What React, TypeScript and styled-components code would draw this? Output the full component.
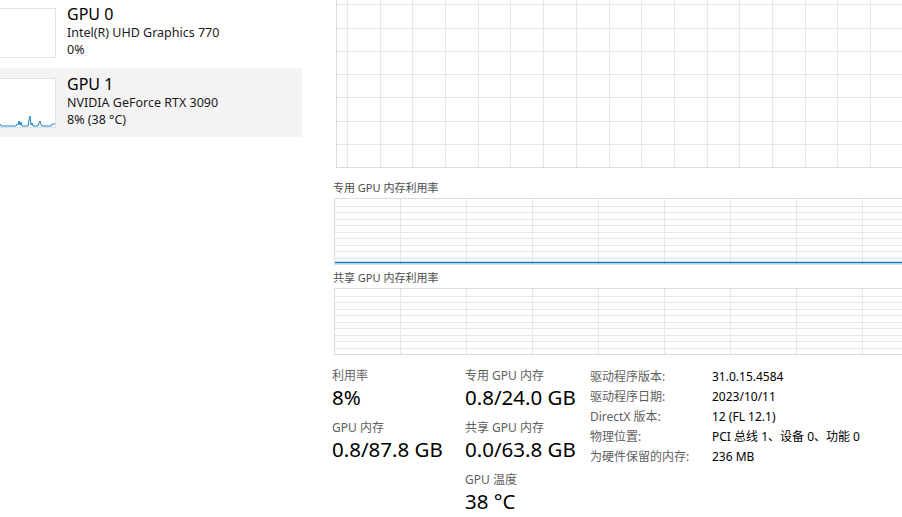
import React from 'react';
import styled, { createGlobalStyle } from 'styled-components';

const GlobalStyle = createGlobalStyle`
  html, body {
    margin: 0;
    padding: 0;
    background: #ffffff;
    overflow: hidden;
  }
  body {
    font-family: "Noto Sans", "Noto Sans CJK SC", sans-serif;
    color: #000;
  }
`;

const Page = styled.div`
  display: flex;
  width: 902px;
  height: 517px;
  overflow: hidden;
  background: #fff;
`;

const Sidebar = styled.div`
  width: 302px;
  flex-shrink: 0;
  display: flex;
  flex-direction: column;
  gap: 1px;
  margin-top: -2px;
`;

const DeviceRow = styled.div<{ $active?: boolean }>`
  height: 69px;
  display: flex;
  align-items: flex-start;
  gap: 11px;
  background: ${(p) => (p.$active ? '#f3f3f3' : 'transparent')};
`;

const Thumb = styled.div`
  width: 55px;
  height: 48px;
  margin-top: 10px;
  border: 1px solid #e2e2e2;
  border-left: none;
  background: #fff;
  flex-shrink: 0;
  overflow: hidden;
  svg {
    display: block;
  }
`;

const DeviceText = styled.div`
  display: flex;
  flex-direction: column;
  padding-top: 6px;
`;

const DeviceName = styled.div`
  font-size: 16px;
  line-height: 20px;
  color: #000;
`;

const DeviceSub = styled.div`
  font-size: 12.5px;
  line-height: 17px;
  color: #1a1a1a;
`;

const Main = styled.div`
  flex: 1;
  min-width: 0;
  display: flex;
  flex-direction: column;
  padding-left: 32px;
  overflow: hidden;
`;

const ChartBox = styled.div<{ $h: number }>`
  height: ${(p) => p.$h}px;
  width: 640px;
  border: 1px solid #dcdcdc;
  border-right: none;
  flex-shrink: 0;
  svg {
    display: block;
  }
`;

const TopChart = styled(ChartBox)`
  margin-top: -20px;
  margin-left: 2px;
`;

const ChartLabel = styled.div<{ $top: number }>`
  font-size: 11px;
  line-height: 15px;
  color: #4c4c4c;
  margin: ${(p) => p.$top}px 0 3px -1px;
`;

const Stats = styled.div`
  display: flex;
  margin: 13px 0 0 -2px;
`;

const StatCol = styled.div<{ $w: number }>`
  width: ${(p) => p.$w}px;
  display: flex;
  flex-direction: column;
  gap: 10px;
  flex-shrink: 0;
`;

const Stat = styled.div`
  display: flex;
  flex-direction: column;
`;

const StatLabel = styled.div`
  font-size: 12px;
  line-height: 16px;
  color: #5f5f5f;
`;

const StatValue = styled.div`
  font-size: 20.5px;
  line-height: 26px;
  color: #000;
  white-space: nowrap;
`;

const InfoGrid = styled.div`
  display: grid;
  grid-template-columns: 122px auto;
  grid-auto-rows: 20px;
  align-items: center;
  margin-top: -2px;
  font-size: 12px;
`;

const InfoKey = styled.div`
  color: #5f5f5f;
  white-space: nowrap;
`;

const InfoVal = styled.div`
  color: #000;
  white-space: nowrap;
`;

type GridProps = {
  width: number;
  height: number;
  rows: number;
  colStart: number;
  colStep: number;
  children?: React.ReactNode;
};

const Grid = ({ width, height, rows, colStart, colStep, children }: GridProps) => {
  const lines: React.ReactNode[] = [];
  for (let i = 1; i < rows; i++) {
    const y = Math.round((height * i) / rows) + 0.5;
    lines.push(<line key={'h' + i} x1={0} x2={width} y1={y} y2={y} />);
  }
  for (let x = colStart; x < width; x += colStep) {
    const xx = Math.round(x) + 0.5;
    lines.push(<line key={'v' + x} x1={xx} x2={xx} y1={0} y2={height} />);
  }
  return (
    <svg width={width} height={height}>
      <g stroke="#e6e6e6" strokeWidth={1}>
        {lines}
      </g>
      {children}
    </svg>
  );
};

const Spark = () => (
  <svg width={55} height={48}>
    <path
      d="M0,45 L1,47 L16,47 L17,45 L18,46 L19,42 L20,46 L21,43 L22,47 L28,47 L29,41 L30,37 L31,46 L32,44 L33,47 L38,47 L39,44 L40,42 L41,46 L42,47 L51,47 L52,45 L55,45"
      fill="none"
      stroke="#1b86cf"
      strokeWidth={1}
    />
  </svg>
);

const info: [string, string][] = [
  ['驱动程序版本:', '31.0.15.4584'],
  ['驱动程序日期:', '2023/10/11'],
  ['DirectX 版本:', '12 (FL 12.1)'],
  ['物理位置:', 'PCI 总线 1、设备 0、功能 0'],
  ['为硬件保留的内存:', '236 MB'],
];

export default function App() {
  return (
    <>
      <GlobalStyle />
      <Page>
        <Sidebar>
          <DeviceRow>
            <Thumb />
            <DeviceText>
              <DeviceName>GPU 0</DeviceName>
              <DeviceSub>Intel(R) UHD Graphics 770</DeviceSub>
              <DeviceSub>0%</DeviceSub>
            </DeviceText>
          </DeviceRow>
          <DeviceRow $active>
            <Thumb>
              <Spark />
            </Thumb>
            <DeviceText>
              <DeviceName>GPU 1</DeviceName>
              <DeviceSub>NVIDIA GeForce RTX 3090</DeviceSub>
              <DeviceSub>8% (38 °C)</DeviceSub>
            </DeviceText>
          </DeviceRow>
        </Sidebar>
        <Main>
          <TopChart $h={186}>
            <Grid width={640} height={186} rows={8} colStart={10} colStep={32.69} />
          </TopChart>
          <ChartLabel $top={12}>专用 GPU 内存利用率</ChartLabel>
          <ChartBox $h={65}>
            <Grid width={640} height={65} rows={10} colStart={65.4} colStep={66}>
              <rect x={0} y={63} width={640} height={2} fill="rgba(17,125,187,0.12)" />
              <line x1={0} x2={640} y1={63.5} y2={63.5} stroke="#117dbb" strokeWidth={1.4} />
            </Grid>
          </ChartBox>
          <ChartLabel $top={5}>共享 GPU 内存利用率</ChartLabel>
          <ChartBox $h={65}>
            <Grid width={640} height={65} rows={10} colStart={65.4} colStep={66} />
          </ChartBox>
          <Stats>
            <StatCol $w={133}>
              <Stat>
                <StatLabel>利用率</StatLabel>
                <StatValue>8%</StatValue>
              </Stat>
              <Stat>
                <StatLabel>GPU 内存</StatLabel>
                <StatValue>0.8/87.8 GB</StatValue>
              </Stat>
            </StatCol>
            <StatCol $w={125}>
              <Stat>
                <StatLabel>专用 GPU 内存</StatLabel>
                <StatValue>0.8/24.0 GB</StatValue>
              </Stat>
              <Stat>
                <StatLabel>共享 GPU 内存</StatLabel>
                <StatValue>0.0/63.8 GB</StatValue>
              </Stat>
              <Stat>
                <StatLabel>GPU 温度</StatLabel>
                <StatValue>38 °C</StatValue>
              </Stat>
            </StatCol>
            <InfoGrid>
              {info.map(([k, v]) => (
                <React.Fragment key={k}>
                  <InfoKey>{k}</InfoKey>
                  <InfoVal>{v}</InfoVal>
                </React.Fragment>
              ))}
            </InfoGrid>
          </Stats>
        </Main>
      </Page>
    </>
  );
}
